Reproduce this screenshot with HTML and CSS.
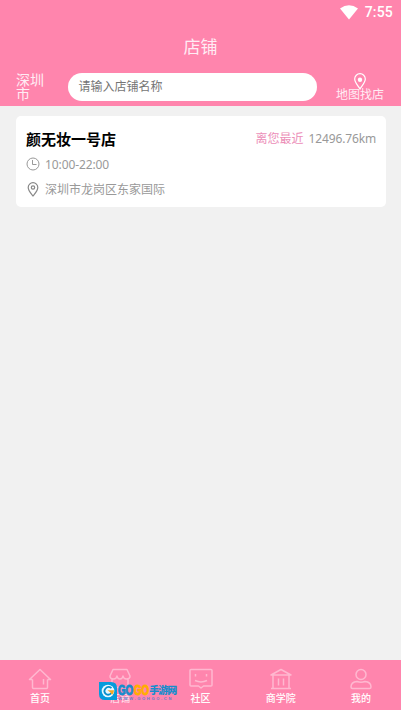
FILE: index.html
```html
<!DOCTYPE html>
<html lang="zh-CN">
<head>
<meta charset="utf-8">
<title>店铺</title>
<link rel="stylesheet" href="styles.css">
</head>
<body>
<div class="app">
  <header class="header">
    <div class="status">
      <svg class="wifi" viewBox="0 0 18 15" width="18" height="15"><path d="M0 3.500Q9-3 18 3.500L9 14.500Z" fill="#fff"/></svg>
      <span class="time">7:55</span>
    </div>
    <h1 class="title">店铺</h1>
    <div class="search-row">
      <span class="city">深圳市</span>
      <div class="search">请输入店铺名称</div>
      <div class="map-link">
        <svg viewBox="0 0 12 17" width="12" height="17" fill="none" stroke="#fff" stroke-width="1.200"><path d="M6 16C4 12.500.7 9.500.7 6a5.300 5.300 0 0 1 10.600 0C11.300 9.500 8 12.500 6 16Z"/><circle cx="6" cy="6.700" r="2.200" fill="#fff" stroke="none"/></svg>
        <span>地图找店</span>
      </div>
    </div>
  </header>
  <main class="content">
    <article class="card">
      <div class="card-head">
        <h2 class="name">颜无妆一号店</h2>
        <div class="distance"><span class="nearest">离您最近</span><span class="km">12496.76km</span></div>
      </div>
      <div class="line hours">
        <svg viewBox="0 0 14 14" width="14" height="14" fill="none" stroke="#999"><circle cx="7" cy="7" r="6"/><path d="M6.500 3v4.500h4"/></svg>
        <span>10:00-22:00</span>
      </div>
      <div class="line address">
        <svg viewBox="0 0 14 15" width="14" height="15" fill="none" stroke="#888" stroke-width="1.200"><path d="M7 14C5 11.500 2.200 8.700 2.200 5.500a4.800 4.800 0 0 1 9.600 0C11.800 8.700 9 11.500 7 14Z"/><circle cx="7" cy="5.500" r="1.700"/></svg>
        <span>深圳市龙岗区东家国际</span>
      </div>
    </article>
  </main>
  <nav class="tabs">
    <div class="tab">
      <svg class="icon" viewBox="0 0 24 22"><path d="M4.500 11.500v8q0 1 1 1h13q1 0 1-1v-8M4.500 11.500h-3L12 1.500l10.500 10h-3M15.500 11v5.500"/></svg>
      <span>首页</span>
    </div>
    <div class="tab">
      <svg class="icon" viewBox="0 0 24 22"><path d="M5 1.500h14l3 6.500q0 3-3.500 3-3 0-3.500-3-.5 3-3 3t-3-3q-.5 3-3.500 3Q2 11 2 8ZM4 11v8.500h16V11"/></svg>
      <span class="dim">店铺</span>
      <div class="watermark">
        <svg class="mark" viewBox="0 0 18 18" width="18" height="18"><path d="M0 0h12q6 0 6 6v12H6q-6 0-6-6Z" fill="#079bdc"/><circle cx="9" cy="9" r="6.300" fill="#e9f8ff"/><path d="M12.500 6Q9 3.500 6.500 6.500T7 12q3 2 5.500-1" fill="none" stroke="#078fca" stroke-width="1.800"/><path d="M8.500 8.300H15q0 3-2 4.500l-1.500-2.300Z" fill="#f5a623"/></svg>
        <div class="mark-text">
          <div class="mark-main"><b class="go">GO</b><b class="go gold">GO</b><b class="cn">手游网</b></div>
          <div class="mark-url">WWW.GOHGO.CN</div>
        </div>
      </div>
    </div>
    <div class="tab">
      <svg class="icon" viewBox="0 0 24 22"><path d="M2 1.500h20q1 0 1 1v14.500q0 1-1 1h-7.500L12 20l-2.500-2H2q-1 0-1-1V2.500q0-1 1-1ZM6.500 6v2.500M17.500 6v2.500M6 12.500q6 2.800 12 0"/></svg>
      <span>社区</span>
    </div>
    <div class="tab">
      <svg class="icon" viewBox="0 0 24 22"><path d="M2 7 12 1.500 22 7ZM4 7v13M20 7v13M2 20.500h20M9.500 10.500v7M14.500 10.500v7"/></svg>
      <span>商学院</span>
    </div>
    <div class="tab">
      <svg class="icon" viewBox="0 0 24 22"><circle cx="12" cy="6.500" r="5"/><path d="M2 19q0-5 6-5.500 4 1.500 8 0 6 .5 6 5.500 0 1.500-1.500 1.500h-17Q2 20.500 2 19Z"/></svg>
      <span>我的</span>
    </div>
  </nav>
</div>
</body>
</html>
```
FILE: styles.css
```css
* { box-sizing: border-box; }
body { margin: 0; font-family: "Noto Sans", "Noto Sans CJK SC", sans-serif; }
h1, h2 { margin: 0; }
svg { display: block; flex: none; }
.app { display: flex; flex-direction: column; height: 710px; background: #f1f1f1; }
.header { height: 106px; background: #ff85ad; color: #fff; }
.status { height: 24px; padding: 0 8px 0 0; display: flex; justify-content: flex-end; align-items: center; gap: 7px; }
.time { font: 500 14px/24px Roboto, sans-serif; letter-spacing: .2px; }
.title { height: 44px; font-size: 17px; font-weight: 400; line-height: 45px; text-align: center; color: #ffecf4; }
.search-row { display: flex; align-items: flex-start; padding: 5px 17px 0 16px; }
.city { width: 30px; margin-right: 22px; font-size: 14px; line-height: 14px; color: #ffecf4; }
.search { width: 249px; height: 28px; padding-left: 10.500px; border-radius: 14px; background: #fff; color: #757575; font-size: 12px; line-height: 28px; }
.map-link { flex: 1; display: flex; flex-direction: column; align-items: center; padding-left: 19px; font-size: 12px; line-height: 12px; white-space: nowrap; color: #ffecf4; }
.map-link span { margin-top: -1px; }
.content { flex: 1; padding: 10px 15px 0 16px; }
.card { height: 91px; padding: 10px; border-radius: 5px; background: #fff; }
.card-head { display: flex; justify-content: space-between; height: 26px; line-height: 26px; }
.name { font-size: 15px; font-weight: 700; line-height: 27px; color: #000; }
.distance { display: flex; gap: 5px; font-size: 12px; color: #999; }
.nearest { color: #ec8eb8; }
.km { letter-spacing: -.15px; }
.line { display: flex; align-items: center; gap: 5px; height: 25px; font-size: 12px; color: #999; }
.hours { letter-spacing: -.1px; }
.hours svg { margin-top: -2px; }
.address { height: 24px; }
.tabs { display: flex; height: 50px; background: #ff85ad; color: #fff; }
.tab { flex: 1; position: relative; display: flex; flex-direction: column; align-items: center; padding-top: 8px; font-size: 10px; line-height: 14px; font-weight: 500; }
.tab > span { margin-top: 1px; }
.tab > .dim { color: #ffdbe8; }
.icon { width: 24px; height: 22px; fill: none; stroke: #ffb8d0; stroke-width: 1.500; stroke-linejoin: round; }
.watermark { position: absolute; left: 19px; top: 22px; width: 80px; display: flex; gap: 1px; }
.mark-text { flex: none; width: 60px; white-space: nowrap; }
.mark-main { display: flex; align-items: center; height: 15px; }
.go { flex: none; width: 15.500px; font: 700 15px/15px "Liberation Sans", sans-serif; color: #168dcc; -webkit-text-stroke: 1px currentColor; transform: scaleX(.65); transform-origin: left; }
.gold { color: #ffae00; }
.cn { font-size: 10px; font-weight: 900; line-height: 14px; letter-spacing: -1px; color: #168dcc; }
.mark-url { font: 700 4px/4px "Liberation Sans", sans-serif; letter-spacing: 1.700px; color: #5f7fc8; }
```
